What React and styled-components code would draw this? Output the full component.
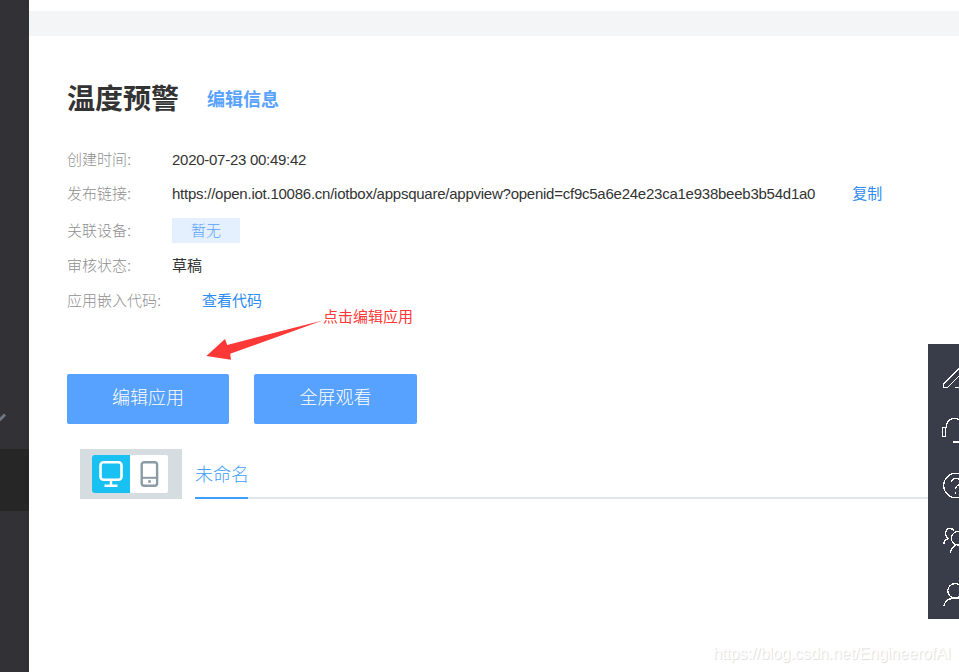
import styled, { createGlobalStyle } from 'styled-components';

export default function App() {
  return (
    <>
      <GlobalStyle />
      <Page>
        <Sidebar>
          <MenuArrow width="8" height="12" viewBox="0 0 8 12">
            <path d="M-2 9.5L0 8.5L5 3.5" fill="none" stroke="#6f7583" strokeWidth="3" />
          </MenuArrow>
          <ActiveMenu />
        </Sidebar>

        <Main>
          <Band />
          <Content>
            <Header>
              <Title>温度预警</Title>
              <EditInfo>编辑信息</EditInfo>
            </Header>

            <Row $height={34}>
              <Label>创建时间:</Label>
              <Value $spacing="-0.27px">2020-07-23 00:49:42</Value>
            </Row>
            <Row $height={34}>
              <Label>发布链接:</Label>
              <Value $spacing="-0.244px">
                https://open.iot.10086.cn/iotbox/appsquare/appview?openid=cf9c5a6e24e23ca1e938beeb3b54d1a0
              </Value>
              <Link $left={37}>复制</Link>
            </Row>
            <Row $height={39}>
              <Label>关联设备:</Label>
              <Tag>暂无</Tag>
            </Row>
            <Row $height={32}>
              <Label>审核状态:</Label>
              <Value>草稿</Value>
            </Row>
            <Row $height={38}>
              <Label>应用嵌入代码:</Label>
              <Link $left={30}>查看代码</Link>
            </Row>

            <Buttons>
              <Button $width={162}>编辑应用</Button>
              <Button $width={163}>全屏观看</Button>
            </Buttons>

            <Preview>
              <DeviceSwitch>
                <Device $active>
                  <svg width="38" height="38" viewBox="0 0 38 38" fill="none" stroke="#fff">
                    <rect x="8.5" y="7.3" width="21" height="17.4" rx="3" strokeWidth="2.6" />
                    <path d="M19 25v5.5M12.5 30.8h13" strokeWidth="2.4" />
                  </svg>
                </Device>
                <Device>
                  <svg width="38" height="38" viewBox="0 0 38 38" fill="none" stroke="#8b9ca5">
                    <rect x="11.7" y="7.2" width="15.4" height="23.6" rx="2.6" strokeWidth="2.4" />
                    <path d="M12 22.8h15" strokeWidth="2" />
                    <rect x="18.2" y="25.2" width="2.6" height="2.6" fill="#8b9ca5" stroke="none" />
                  </svg>
                </Device>
              </DeviceSwitch>
              <Tabs>
                <Tab>未命名</Tab>
              </Tabs>
            </Preview>
          </Content>
        </Main>

        <Note>点击编辑应用</Note>
        <NoteArrow width="120" height="44" viewBox="204 318 120 44">
          <path d="M206.3 356L225 339L227.2 345L322.5 320.5L230.2 353.7L231 359.8Z" fill="#fd3836" />
        </NoteArrow>

        <Toolbox>
          <ToolIcon viewBox="0 0 31 55">
            <path d="M31.5 24.3L15.5 39.8V43.5H19.5L31.5 31.5M27 43.5h4" />
          </ToolIcon>
          <ToolIcon viewBox="0 0 31 55">
            <rect x="14.5" y="28.5" width="3" height="9" rx="0.6" />
            <path d="M18.5 28.5V26Q20.5 19.5 27 19.5Q29.5 19.5 31.5 21" />
            <path d="M25 42.5h6" strokeWidth="2" />
          </ToolIcon>
          <ToolIcon viewBox="0 0 31 55">
            <circle cx="28" cy="31.5" r="12.3" />
            <path d="M23.5 28Q23.5 24.5 27.8 24.5Q32 24.5 32 28Q32 30 29.5 31.5Q27.7 33 27.7 35.2M27.7 37.5v2" />
          </ToolIcon>
          <ToolIcon viewBox="0 0 31 55">
            <path d="M15.5 35.5Q16.2 31.5 19.8 29.4C16.6 26.8 16.6 19.5 22 19.5Q25 19.5 26 22" />
            <circle cx="30.2" cy="29.3" r="6.8" />
            <path d="M22.5 44Q23 38.5 28 35.8" />
          </ToolIcon>
          <ToolIcon viewBox="0 0 31 55">
            <circle cx="27" cy="26.8" r="7.2" />
            <path d="M15.5 42.5C17 37.5 20 34.5 25 34.5H31" />
          </ToolIcon>
        </Toolbox>

        <Watermark>https://blog.csdn.net/EngineerofAI</Watermark>
      </Page>
    </>
  );
}

const GlobalStyle = createGlobalStyle`
  * {
    box-sizing: border-box;
  }
  body {
    margin: 0;
    overflow: hidden;
    font-family: 'Liberation Sans', 'Noto Sans CJK SC', sans-serif;
  }
`;

const Page = styled.div`
  position: relative;
  display: flex;
  width: 959px;
  height: 672px;
  overflow: hidden;
  background: #fff;
`;

const Sidebar = styled.aside`
  display: flex;
  flex-direction: column;
  width: 29px;
  background: #323136;
`;

const MenuArrow = styled.svg`
  display: block;
  margin-top: 411px;
`;

const ActiveMenu = styled.div`
  height: 62px;
  margin-top: 26px;
  background: #262626;
`;

const Main = styled.main`
  flex: 1;
  padding-top: 11px;
`;

const Band = styled.div`
  height: 25px;
  background: #f4f5f7;
`;

const Content = styled.section`
  padding: 38px 0 0 38px;
`;

const Header = styled.div`
  display: flex;
  align-items: center;
  height: 50px;
  margin-bottom: 19px;
`;

const Title = styled.h1`
  margin: 0;
  padding-top: 2px;
  font-size: 28px;
  line-height: 40px;
  font-weight: 700;
  color: #333;
`;

const EditInfo = styled.a`
  margin-left: 28px;
  padding-bottom: 2px;
  font-size: 18px;
  font-weight: 700;
  color: #57a1ff;
`;

const Row = styled.div`
  display: flex;
  align-items: center;
  height: ${({ $height }) => $height}px;
  font-size: 15px;
  line-height: 20px;
  font-weight: 300;
  white-space: nowrap;
`;

const Label = styled.span`
  min-width: 105px;
  color: #8f8f8f;
`;

const Value = styled.span`
  font-weight: 400;
  color: #333;
  letter-spacing: ${({ $spacing }) => $spacing || 'normal'};
`;

const Link = styled.a`
  margin-left: ${({ $left }) => $left}px;
  font-weight: 400;
  color: #2d8cf0;
`;

const Tag = styled.span`
  width: 68px;
  height: 25px;
  line-height: 25px;
  text-align: center;
  color: #57a1ff;
  background: #e5f0ff;
`;

const Buttons = styled.div`
  display: flex;
  gap: 25px;
  margin-top: 54px;
`;

const Button = styled.button`
  width: ${({ $width }) => $width}px;
  height: 50px;
  padding: 0 0 6px;
  border: 0;
  border-radius: 2px;
  font-family: inherit;
  font-size: 18px;
  font-weight: 300;
  color: #fff;
  background: #57a1ff;
`;

const Preview = styled.div`
  display: flex;
  gap: 13px;
  margin: 25px 0 0 13px;
`;

const DeviceSwitch = styled.div`
  display: flex;
  width: 102px;
  height: 50px;
  padding: 6px 12px;
  background: #d6dde0;
`;

const Device = styled.div`
  width: 38px;
  height: 38px;
  border-radius: ${({ $active }) => ($active ? '3px 0 0 3px' : '0 2px 2px 0')};
  background: ${({ $active }) => ($active ? '#18c1f1' : '#fff')};
  svg {
    display: block;
  }
`;

const Tabs = styled.div`
  display: flex;
  flex: 1;
  height: 50px;
  box-shadow: inset 0 -2px #dfe4ed;
`;

const Tab = styled.div`
  width: 53px;
  border-bottom: 2px solid #409eff;
  font-size: 18px;
  line-height: 52px;
  font-weight: 300;
  white-space: nowrap;
  color: #409eff;
`;

const Note = styled.span`
  position: absolute;
  left: 323px;
  top: 307px;
  font-size: 15px;
  line-height: 20px;
  color: #fd3836;
`;

const NoteArrow = styled.svg`
  position: absolute;
  left: 204px;
  top: 318px;
`;

const Toolbox = styled.div`
  position: absolute;
  right: 0;
  top: 344px;
  width: 31px;
  height: 275px;
  background: #393d49;
`;

const ToolIcon = styled.svg`
  display: block;
  width: 31px;
  height: 55px;
  fill: none;
  stroke: #fff;
  stroke-width: 1.3;
  shape-rendering: crispEdges;
`;

const Watermark = styled.span`
  position: absolute;
  right: 8px;
  bottom: 8px;
  font-size: 16px;
  line-height: 20px;
  letter-spacing: -0.06px;
  color: #fff;
  text-shadow: 1px 1px 1px #dcdcdc;
`;
